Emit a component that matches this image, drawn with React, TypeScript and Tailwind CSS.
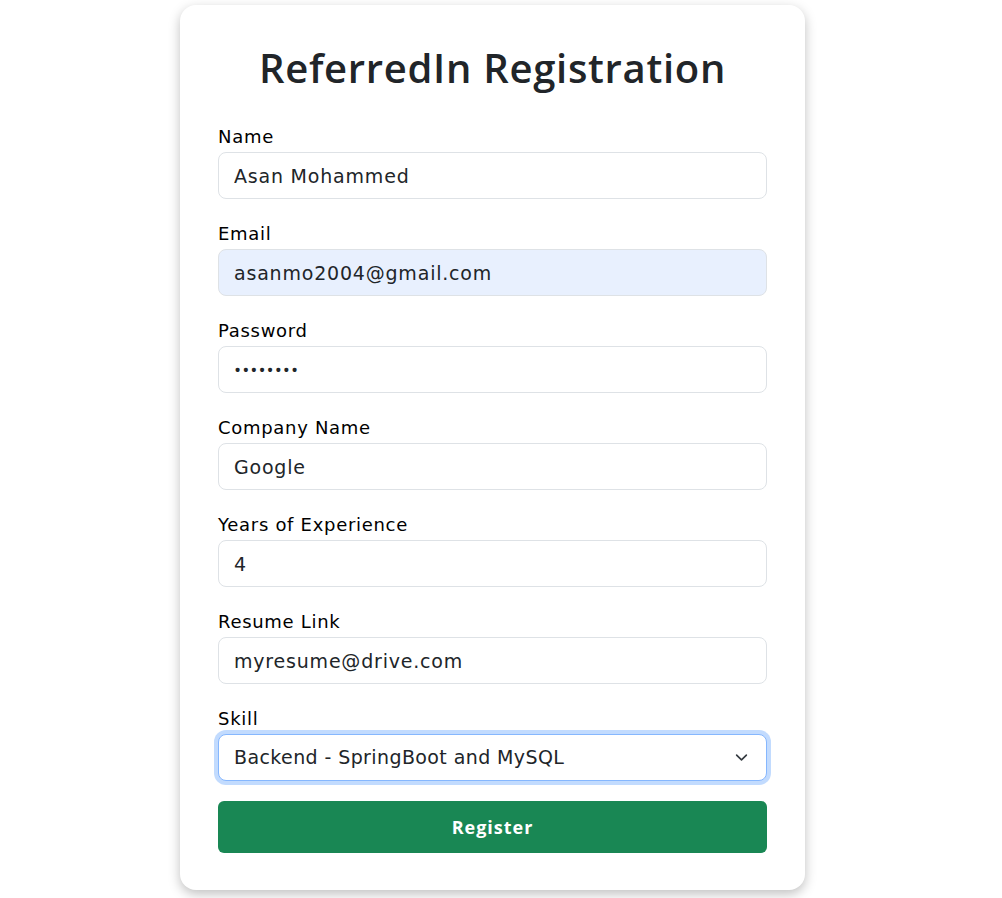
import React from "react";

const body = { fontFamily: '"DejaVu Sans", "Open Sans", sans-serif' };
const heading = { fontFamily: '"Open Sans", "Liberation Sans", sans-serif' };

function Field({
  label,
  value,
  type = "text",
  autofill = false,
}: {
  label: string;
  value: string;
  type?: string;
  autofill?: boolean;
}) {
  const isPassword = type === "password";
  return (
    <div className="mb-[23px]">
      <label className="mb-[3px] block text-[18px] leading-[24px] tracking-[0.7px] text-black">{label}</label>
      <input
        type={type}
        defaultValue={value}
        readOnly
        style={isPassword ? heading : body}
        className={`block h-[47px] w-full rounded-[8px] border border-[#dee2e6] px-[15px] text-[19px] text-[#212529] outline-none ${
          isPassword ? "tracking-[1px]" : "tracking-[0.8px]"
        } ${autofill ? "bg-[#e8f0fe]" : "bg-white"}`}
      />
    </div>
  );
}

export default function App() {
  return (
    <div className="flex min-h-[898px] justify-center bg-white pr-[17px] pt-[5px]" style={body}>
      <div className="h-fit w-[625px] rounded-[16px] bg-white px-[38px] pb-[37px] pt-[38px] shadow-[0_4px_12px_rgba(0,0,0,0.25)]">
        <h1
          className="mb-[32px] text-center text-[40px] font-semibold leading-[50px] tracking-[0.7px] text-[#212529]"
          style={heading}
        >
          ReferredIn Registration
        </h1>
        <Field label="Name" value="Asan Mohammed" />
        <Field label="Email" value="asanmo2004@gmail.com" autofill />
        <Field label="Password" value="password" type="password" />
        <Field label="Company Name" value="Google" />
        <Field label="Years of Experience" value="4" />
        <Field label="Resume Link" value="myresume@drive.com" />
        <div className="mb-[20px]">
          <label className="mb-[3px] block text-[18px] leading-[24px] tracking-[0.7px] text-black">Skill</label>
          <div className="relative">
            <div className="flex h-[47px] w-full items-center rounded-[8px] border border-[#86b7fe] bg-white px-[15px] text-[19px] tracking-[0.4px] text-[#212529] shadow-[0_0_0_4px_rgba(13,110,253,0.25)]">
              Backend - SpringBoot and MySQL
            </div>
            <svg
              className="absolute right-[19px] top-[17px]"
              width="13"
              height="13"
              viewBox="0 0 16 16"
              fill="none"
              stroke="#343a40"
              strokeWidth="2"
              strokeLinecap="round"
              strokeLinejoin="round"
            >
              <path d="m2 5 6 6 6-6" />
            </svg>
          </div>
        </div>
        <button
          className="h-[52px] w-full rounded-[6px] bg-[#198754] text-[18px] font-bold tracking-[1px] text-white"
          style={heading}
        >
          Register
        </button>
      </div>
    </div>
  );
}
